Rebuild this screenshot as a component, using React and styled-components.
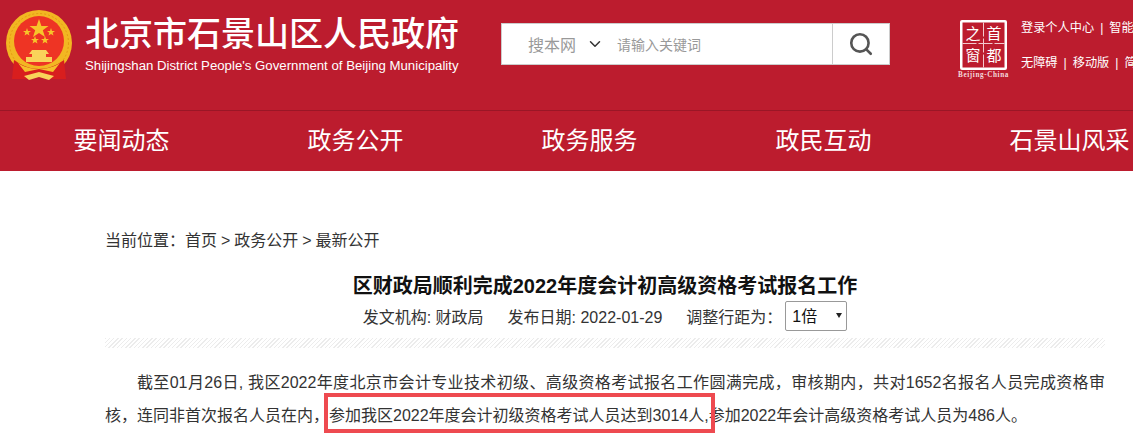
import styled, { createGlobalStyle } from 'styled-components'
import { ChevronDown, Search } from 'lucide-react'

const GlobalStyle = createGlobalStyle`
  html, body {
    margin: 0;
    padding: 0;
    background: #fff;
    overflow: hidden;
  }
  body {
    font-family: "Liberation Sans", "Noto Sans CJK SC", sans-serif;
    color: #333;
  }
`

const Page = styled.div`
  width: 1133px;
  height: 433px;
  overflow: hidden;
`

const Header = styled.header`
  height: 110px;
  background: #bc1c2e;
  border-bottom: 1px solid #9a1626;
  display: flex;
  padding-left: 5px;
  box-sizing: content-box;
`

const Brand = styled.div`
  display: flex;
  width: 496px;
  flex: none;
`

const Names = styled.div`
  margin-left: 10px;
  padding-top: 12px;
  color: #fff;
`

const CnName = styled.div`
  font-size: 34px;
  line-height: 44px;
  font-weight: 500;
  white-space: nowrap;
`

const EnName = styled.div`
  font-size: 13.22px;
  line-height: 16px;
  margin-top: 2px;
  white-space: nowrap;
`

const SearchBox = styled.div`
  margin-top: 23px;
  width: 389px;
  height: 42px;
  box-sizing: border-box;
  background: #fff;
  border: 1px solid #ccc;
  display: flex;
  align-items: center;
  flex: none;
`

const SiteSelect = styled.div`
  display: flex;
  align-items: center;
  padding-left: 26px;
  width: 115px;
  box-sizing: border-box;
  font-size: 16px;
  color: #999;
  gap: 10px;
  flex: none;
`

const Keyword = styled.div`
  flex: 1;
  font-size: 14px;
  color: #999;
`

const SearchButton = styled.div`
  width: 56px;
  height: 100%;
  border-left: 1px solid #ccc;
  display: flex;
  align-items: center;
  justify-content: center;
  color: #555;
  flex: none;
`

const Capital = styled.div`
  margin: 19px 0 0 70px;
  width: 48px;
  flex: none;
`

const Links = styled.div`
  margin-left: 13px;
  padding-top: 19px;
  color: #fff;
  font-size: 12.2px;
  white-space: nowrap;
`

const LinkRow = styled.div`
  line-height: 18px;
  margin-bottom: 17px;
`

const Sep = styled.span`
  margin: 0 6px;
`

const Nav = styled.nav`
  height: 60px;
  background: #bc1c2e;
  display: flex;
  padding-left: 73.5px;
`

const NavItem = styled.div`
  flex: none;
  width: 234px;
  color: #fff;
  font-size: 24px;
  line-height: 60px;
  white-space: nowrap;
`

const Content = styled.main`
  width: 1000px;
  margin: 0 0 0 105px;
  position: relative;
`

const Crumb = styled.div`
  padding-top: 60px;
  font-size: 16px;
  line-height: 20px;
  word-spacing: -0.5px;
  color: #333;
`

const Title = styled.h1`
  margin: 21px 0 0;
  font-size: 20px;
  line-height: 28px;
  font-weight: 700;
  color: #111;
  text-align: center;
`

const Meta = styled.div`
  height: 32px;
  display: flex;
  align-items: center;
  justify-content: center;
  font-size: 16px;
  color: #333;
`

const MetaItem = styled.span`
  margin-right: 24px;
`

const SpacingLabel = styled.span`
  margin-right: 3px;
`

const SelectWrap = styled.span`
  position: relative;
  display: inline-block;
  width: 62px;
  height: 30px;

  &::after {
    content: '';
    position: absolute;
    right: 5px;
    top: 12px;
    border-left: 3.5px solid transparent;
    border-right: 3.5px solid transparent;
    border-top: 5px solid #222;
    pointer-events: none;
  }
`

const SpacingSelect = styled.select`
  appearance: none;
  width: 100%;
  height: 100%;
  padding: 0 0 0 6px;
  font-family: inherit;
  font-size: 16px;
  color: #111;
  background: #fff;
  border: 1px solid #999;
  border-radius: 2px;
`

const Hatch = styled.div`
  height: 10px;
  margin-top: 6px;
  background: repeating-linear-gradient(135deg, #ececec 0 1px, #fff 1px 3px);
`

const Article = styled.p`
  margin: 18px 0 0;
  font-size: 16px;
  line-height: 33px;
  text-indent: 2em;
  text-align: justify;
  color: #333;
`

const Callout = styled.div`
  position: absolute;
  left: 219px;
  top: 222px;
  width: 391px;
  height: 40px;
  box-sizing: border-box;
  border: 4px solid #ee4a50;
`

const Emblem = () => (
  <svg width="70" height="75" viewBox="0 0 70 75" style={{ marginTop: 10, flex: 'none' }}>
    <circle cx="34" cy="33" r="33" fill="#f2b722" />
    <circle cx="34" cy="33" r="29.5" fill="none" stroke="#e39a12" strokeWidth="1" strokeDasharray="2 2" />
    <circle cx="34" cy="31" r="25" fill="#ee3424" />
    <polygon points="34,9 36.4,16 43.5,16 37.8,20.3 40,27 34,23 28,27 30.2,20.3 24.5,16 31.6,16" fill="#f7c52a" />
    <polygon points="22,18 23,21 26,21 23.6,22.8 24.5,25.6 22,24 19.5,25.6 20.4,22.8 18,21 21,21" fill="#f7c52a" />
    <polygon points="46,18 47,21 50,21 47.6,22.8 48.5,25.6 46,24 43.5,25.6 44.4,22.8 42,21 45,21" fill="#f7c52a" />
    <polygon points="30,26 31,29 34,29 31.6,30.8 32.5,33.6 30,32 27.5,33.6 28.4,30.8 26,29 29,29" fill="#f7c52a" />
    <polygon points="40,26 41,29 44,29 41.6,30.8 42.5,33.6 40,32 37.5,33.6 38.4,30.8 36,29 39,29" fill="#f7c52a" />
    <path d="M27 40h14l3 4h-3v3h6v5H21v-5h6v-3h-3z" fill="#f9d35a" />
    <path d="M9 50c8 6 17 9 25 9s17-3 25-9l2 19H48l-14-4-14 4H7z" fill="#d81e1e" />
    <path d="M13 53c6 4 14 6 21 6s15-2 21-6l-7 9-14-3-14 3z" fill="#f5c02a" />
    <path d="M19 66l15-4 15 4-5 4-10-3-10 3z" fill="#f9d35a" />
  </svg>
)

const CapitalLogo = () => (
  <svg width="52" height="60" viewBox="0 0 52 60" style={{ marginLeft: -2, overflow: 'visible' }}>
    <rect x="2" y="1" width="47" height="50" rx="2" fill="#fff" />
    <rect x="4.5" y="3.5" width="42" height="45" fill="#bc1c2e" />
    <path d="M25.5 3.5v45M4.5 24.5h42" stroke="#f3c9ce" strokeWidth="1" strokeDasharray="14 2" />
    <g fill="#fff" fontFamily="Noto Sans CJK SC, sans-serif" fontSize="15" textAnchor="middle">
      <text x="15" y="20">之</text>
      <text x="36" y="20">首</text>
      <text x="15" y="42">窗</text>
      <text x="36" y="42">都</text>
    </g>
    <text x="25.5" y="58" fill="#f4d9dc" fontFamily="Liberation Serif, serif" fontWeight="700" fontSize="7.2" letterSpacing="0.6" textAnchor="middle">
      Beijing-China
    </text>
  </svg>
)

const navItems = ['要闻动态', '政务公开', '政务服务', '政民互动', '石景山风采']

const App = () => {
  return (
    <Page>
      <GlobalStyle />
      <Header>
        <Brand>
          <Emblem />
          <Names>
            <CnName>北京市石景山区人民政府</CnName>
            <EnName>Shijingshan District People's Government of Beijing Municipality</EnName>
          </Names>
        </Brand>
        <SearchBox>
          <SiteSelect>
            搜本网
            <ChevronDown size={18} color="#333" />
          </SiteSelect>
          <Keyword>请输入关键词</Keyword>
          <SearchButton>
            <Search size={26} strokeWidth={2.4} />
          </SearchButton>
        </SearchBox>
        <Capital>
          <CapitalLogo />
        </Capital>
        <Links>
          <LinkRow>
            登录个人中心<Sep>|</Sep>智能问答
          </LinkRow>
          <LinkRow>
            无障碍<Sep>|</Sep>移动版<Sep>|</Sep>简体版
          </LinkRow>
        </Links>
      </Header>
      <Nav>
        {navItems.map((item) => (
          <NavItem key={item}>{item}</NavItem>
        ))}
      </Nav>
      <Content>
        <Crumb>当前位置：首页 &gt; 政务公开 &gt; 最新公开</Crumb>
        <Title>区财政局顺利完成2022年度会计初高级资格考试报名工作</Title>
        <Meta>
          <MetaItem>发文机构: 财政局</MetaItem>
          <MetaItem>发布日期: 2022-01-29</MetaItem>
          <SpacingLabel>调整行距为：</SpacingLabel>
          <SelectWrap>
            <SpacingSelect defaultValue="1">
              <option value="1">1倍</option>
            </SpacingSelect>
          </SelectWrap>
        </Meta>
        <Hatch />
        <Article>
          截至01月26日, 我区2022年度北京市会计专业技术初级、高级资格考试报名工作圆满完成，审核期内，共对1652名报名人员完成资格审核，连同非首次报名人员在内，参加我区2022年度会计初级资格考试人员达到3014人,参加2022年会计高级资格考试人员为486人。
        </Article>
        <Callout />
      </Content>
    </Page>
  )
}

export default App
